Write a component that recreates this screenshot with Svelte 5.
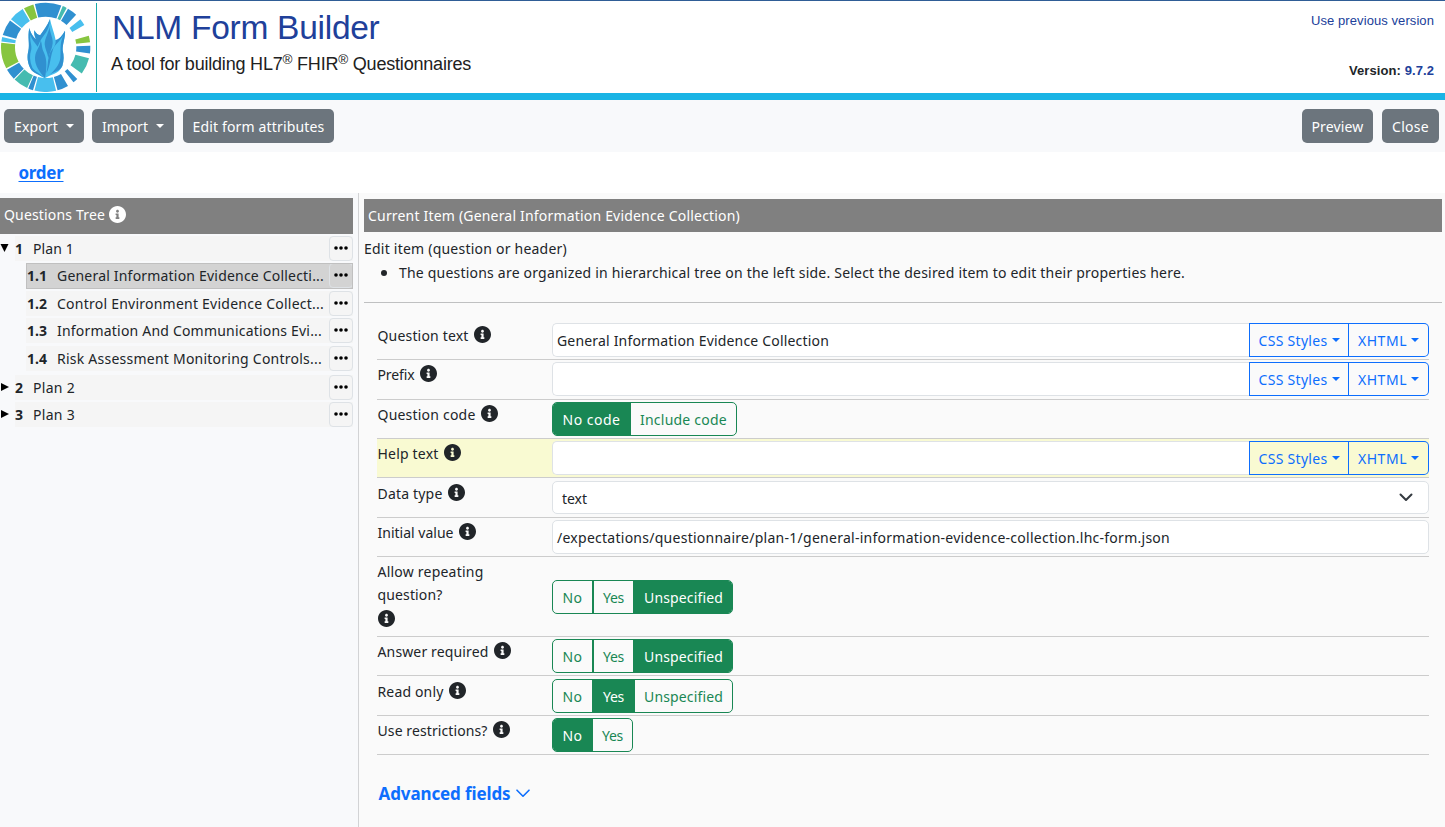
<script>
  // Spreads a label's letters so that it occupies its designed width.
  function fit(node, width) {
    const natural = node.getBoundingClientRect().width;
    const count = [...node.textContent].length;
    node.style.letterSpacing = `${(width - natural) / count}px`;
  }

  const BLUE = '#3090d0', SKY = '#48bfee', TEAL = '#45bbb0', GREEN = '#87c540';
  const ring = [
    [-14, 20.5, BLUE], [22.5, 28, TEAL], [30, 43, BLUE], [51, 60, SKY], [75, 83.5, GREEN],
    [88, 98, BLUE], [104, 126, TEAL], [135, 141.5, BLUE], [150, 164.5, BLUE], [166.5, 194.5, SKY],
    [196.5, 203, BLUE], [204.5, 224, TEAL], [225.5, 240, BLUE], [242, 276, GREEN],
    [277.5, 283.5, SKY], [286, 307, BLUE], [309, 329, SKY], [331, 344, GREEN]
  ];
  const pt = (r, a) => {
    const t = (a * Math.PI) / 180;
    return `${(137 + r * Math.sin(t)).toFixed(1)} ${(142 - r * Math.cos(t)).toFixed(1)}`;
  };
  const wedge = ([a, b]) =>
    `M${pt(134, a)}A134 134 0 0 1 ${pt(134, b)}L${pt(92, b)}A92 92 0 0 0 ${pt(92, a)}Z`;

  const tree = [
    { n: '1', text: 'Plan 1', w: 41, open: true, h: 27 },
    { n: '1.1', text: 'General Information Evidence Collecti...', w: 267, child: true, active: true, h: 28 },
    { n: '1.2', text: 'Control Environment Evidence Collect...', w: 267, child: true, h: 27 },
    { n: '1.3', text: 'Information And Communications Evi...', w: 265, child: true, h: 28 },
    { n: '1.4', text: 'Risk Assessment Monitoring Controls...', w: 265, child: true, h: 29 },
    { n: '2', text: 'Plan 2', w: 42, h: 27 },
    { n: '3', text: 'Plan 3', w: 42, h: 27 }
  ];

  const tri = [['No', 20, 39], ['Yes', 21, 41], ['Unspecified', 79, 99]];
  const rows = [
    { label: 'Question text', w: 91, h: 40, pad: 3, kind: 'rich', value: 'General Information Evidence Collection', vw: 272 },
    { label: 'Prefix', w: 37, h: 40, pad: 2, kind: 'rich', value: '' },
    { label: 'Question code', w: 98, h: 39, pad: 2, kind: 'radio', options: [['No code', 58, 77], ['Include code', 87, 106]], on: 0 },
    { label: 'Help text', w: 61, h: 39, pad: 2, kind: 'rich', value: '', lit: true },
    { label: 'Data type', w: 65, h: 40, pad: 3, kind: 'select', value: 'text', vw: 25 },
    { label: 'Initial value', w: 76, h: 39, pad: 2, kind: 'text', value: '/expectations/questionnaire/plan-1/general-information-evidence-collection.lhc-form.json', vw: 613 },
    { label: 'Allow repeating', w: 106, label2: 'question?', w2: 65, h: 80, pad: 23, kind: 'radio', options: tri, on: 2 },
    { label: 'Answer required', w: 111, h: 39, pad: 2, kind: 'radio', options: tri, on: 2 },
    { label: 'Read only', w: 66, h: 40, pad: 3, kind: 'radio', options: tri, on: 1 },
    { label: 'Use restrictions?', w: 110, h: 39, pad: 2, kind: 'radio', options: [['No', 20, 39], ['Yes', 21, 40]], on: 0 }
  ];
</script>

{#snippet info()}
  <svg class="info" viewBox="8 8 496 496" width="17" height="17"><path fill="currentColor" d="M256 8C119 8 8 119 8 256s111 248 248 248 248-111 248-248S393 8 256 8zm0 110c23.200 0 42 18.800 42 42s-18.800 42-42 42-42-18.800-42-42 18.800-42 42-42zm56 254c0 6.600-5.400 12-12 12h-88c-6.600 0-12-5.400-12-12v-24c0-6.600 5.400-12 12-12h12v-64h-12c-6.600 0-12-5.400-12-12v-24c0-6.600 5.400-12 12-12h64c6.600 0 12 5.400 12 12v100h12c6.600 0 12 5.400 12 12v24z"/></svg>
{/snippet}

<div class="page">
  <header>
    <svg class="logo" viewBox="0 0 288 276" width="96" height="92">
      {#each ring as seg}<path d={wedge(seg)} fill={seg[2]} />{/each}
      <path fill={SKY} d="M88 84C91 99 101 112 108 118C103 107 102 100 103 91C108 101 115 106 121 105C131 92 142 77 150 57C153 75 163 98 167 120C176 119 187 107 195 92C197 110 187 132 188 151C192 168 192 181 187 198C176 224 153 222 134 235C117 224 96 218 91 205C82 187 81 169 85 153C90 132 82 112 88 84Z"/>
      <g fill={BLUE}>
        <path d="M88 84C91 99 101 112 108 118C103 107 102 100 103 91C108 101 115 106 121 105C131 92 142 77 150 57C150 76 143 93 131 107C121 119 117 130 113 140C103 126 95 118 91 104C89 124 96 135 94 148C88 166 89 184 97 203C104 214 120 220 132 233C115 223 96 218 91 205C82 187 81 169 85 153C90 132 82 112 88 84Z"/>
        <path d="M122 121C127 132 124 144 132 158C142 178 140 207 135 234C119 217 104 195 105 173C106 151 121 141 122 121Z"/>
        <path d="M149 76C147 96 160 112 158 130C157 146 148 160 145 174C142 157 135 147 134 133C134 114 148 96 149 76Z"/>
        <path d="M167 120C176 119 187 107 195 92C197 110 187 132 188 151C192 168 192 181 187 198C180 213 157 217 144 228C162 214 179 194 181 174C183 151 178 132 190 106C178 127 162 135 158 152C151 171 151 199 139 220C145 194 142 176 151 157C159 144 168 137 167 120Z"/>
      </g>
    </svg>
    <div class="brand">
      <h1><span use:fit={267.5}>NLM Form Builder</span></h1>
      <p><span class="tag">A tool for building HL7<sup>®</sup> FHIR<sup>®</sup> Questionnaires</span></p>
    </div>
    <div class="version">
      <a href="#top">Use previous version</a>
      <b>Version: <i>9.7.2</i></b>
    </div>
  </header>

  <nav>
    <button class="w80"><span use:fit={44}>Export</span><i class="caret gap"></i></button>
    <button class="w82"><span use:fit={46}>Import</span><i class="caret gap"></i></button>
    <button class="w151"><span use:fit={132}>Edit form attributes</span></button>
    <div class="grow"></div>
    <button class="w71"><span use:fit={52}>Preview</span></button>
    <button class="w57"><span use:fit={37}>Close</span></button>
  </nav>

  <div class="crumb"><a href="#order"><span use:fit={45}>order</span></a></div>

  <main>
    <aside>
      <div class="bar"><span use:fit={101}>Questions Tree</span>{@render info()}</div>
      <div class="tree">
        {#each tree as node}
          <div class="node" class:child={node.child} class:active={node.active} style:height="{node.h}px">
            <div class="arrow">
              {#if !node.child}
                <svg width="9" height="8" viewBox="0 0 9 8"><path d={node.open ? 'M.5 0h8L4.500 8z' : 'M1 0l8 4-8 4z'}/></svg>
              {/if}
            </div>
            <div class="item">
              <b>{node.n}</b><div class="name"><span use:fit={node.w}>{node.text}</span></div>
              <button class="more"><svg width="14" height="4" viewBox="0 0 14 4"><circle cx="2" cy="2" r="1.800"/><circle cx="7" cy="2" r="1.800"/><circle cx="12" cy="2" r="1.800"/></svg></button>
            </div>
          </div>
        {/each}
      </div>
    </aside>

    <section>
      <div class="bar"><span use:fit={372}>Current Item (General Information Evidence Collection)</span></div>
      <div class="intro"><span use:fit={203}>Edit item (question or header)</span></div>
      <div class="bullet"><i></i><span use:fit={786}>The questions are organized in hierarchical tree on the left side. Select the desired item to edit their properties here.</span></div>
      <hr />
      <div class="form">
        {#each rows as row}
          <div class="row" class:lit={row.lit} style:height="{row.h}px">
            <div class="label" class:low={row.pad === 3}>
              <span use:fit={row.w}>{row.label}</span>{#if row.label2}<br /><span use:fit={row.w2}>{row.label2}</span><br /><div class="flush">{@render info()}</div>{:else}{@render info()}{/if}
            </div>
            <div class="control" style:padding-top="{row.pad}px">
              {#if row.kind === 'radio'}
                <div class="radios" class:three={row.options.length === 3}>
                  {#each row.options as [text, tw, bw], i}
                    <div class="opt" class:on={row.on === i} style:width="{bw}px"><span use:fit={tw}>{text}</span></div>
                  {/each}
                </div>
              {:else}
                <div class="field" class:rich={row.kind === 'rich'} class:select={row.kind === 'select'}>
                  {#if row.value}<span use:fit={row.vw}>{row.value}</span>{/if}
                  {#if row.kind === 'select'}
                    <svg width="14" height="9" viewBox="0 0 14 9"><path d="M1.500 1.500L7 7l5.500-5.500" fill="none" stroke="#343a40" stroke-width="2" stroke-linecap="round" stroke-linejoin="round"/></svg>
                  {/if}
                </div>
                {#if row.kind === 'rich'}
                  <div class="drop css"><span use:fit={69}>CSS Styles</span><i class="caret"></i></div>
                  <div class="drop xhtml"><span use:fit={49}>XHTML</span><i class="caret"></i></div>
                {/if}
              {/if}
            </div>
          </div>
        {/each}
      </div>
      <a class="advanced" href="#advanced"><span use:fit={132}>Advanced fields</span><svg width="14" height="9" viewBox="0 0 14 9"><path d="M1 1.200l6 6 6-6" fill="none" stroke="currentColor" stroke-width="1.600" stroke-linecap="round" stroke-linejoin="round"/></svg></a>
    </section>
  </main>
</div>

<style>
  :global(body) { margin: 0; overflow: hidden; }
  .page, .page * { box-sizing: border-box; }
  .page {
    display: flex; flex-direction: column; width: 100%; height: 827px; overflow: hidden;
    background: #fff; color: #212529; font: 14px/24px "Noto Sans", "Open Sans", sans-serif;
  }
  span { white-space: nowrap; }
  i { font-style: normal; }
  button { font: inherit; padding: 0; }
  svg { display: block; flex: none; }

  header {
    display: flex; flex: none; height: 100px; border-top: 1px solid #2f5d96;
    border-bottom: 7px solid #1ab4e5; font-family: "Liberation Sans", Arial, sans-serif;
  }
  .logo { width: 96px; height: 92px; margin-top: -1px; }
  .brand { flex: 1; padding-left: 14px; border-left: 1px solid #1aa9a9; margin-top: 2px; height: 89px; }
  h1 { margin: 5px 0 0 1px; font-size: 33.500px; line-height: 40px; font-weight: 400; color: #20409a; }
  .brand p { margin: 3px 0 0; font-size: 18px; line-height: 26px; color: #212121; }
  .tag { letter-spacing: -.2px; }
  sup { font-size: 13.500px; line-height: 0; vertical-align: 6px; }
  .version { display: flex; flex-direction: column; align-items: flex-end; padding: 10px 11px 0 0; font-size: 13px; line-height: 20px; letter-spacing: .08px; }
  .version a { color: #20409a; text-decoration: none; }
  .version b { margin-top: 30px; }
  .version b i { color: #20409a; }

  nav { display: flex; flex: none; height: 52px; padding: 9px 6px 0 4px; background: #f8f9fb; }
  nav button {
    display: flex; align-items: center; justify-content: center; height: 34px; margin-right: 8px;
    border: 0; border-radius: 5px; background: #6c757d; color: #fff;
  }
  nav button span, .opt span, .drop span { padding-top: 2px; }
  nav button:last-child { margin-right: 0; }
  .grow { flex: 1; }
  .w80 { width: 80px; }
  nav .w82 { width: 82px; margin-right: 9px; }
  .w151 { width: 151px; }
  nav .w71 { width: 71px; margin-right: 9px; }
  .w57 { width: 57px; }
  .caret { border: 4px solid transparent; border-top-color: currentColor; border-bottom: 0; margin-left: 4px; margin-top: -1px; }
  .caret.gap { margin-left: 8px; }

  .crumb { flex: none; height: 41px; padding: 9px 0 0 18.500px; font-size: 17px; font-weight: 700; }
  .crumb a { color: #0d6efd; text-underline-offset: 2px; }

  main { display: flex; flex: 1; min-height: 0; }
  aside { flex: none; width: 359px; padding: 5px 5px 0 0; background: #f8f9fb; border-right: 1px solid #d2d3d5; }
  .bar { display: flex; align-items: center; background: #808080; color: #fff; height: 36px; padding: 0 0 3px 4px; }
  .info { display: inline-block; margin-left: 5px; vertical-align: -2px; }
  .bar .info { margin-left: 4px; margin-top: -1px; }
  .tree { padding-top: 2px; }
  .node { display: flex; align-items: flex-start; }
  .arrow { flex: none; width: 15px; padding: 8px 0 0; }
  .child .arrow { width: 26px; }
  .item { display: flex; flex: 1; height: 25px; background: #f5f5f5; }
  .active .item { height: 26px; }
  .item b { width: 18px; font-size: 14px; line-height: 26px; }
  .child .item b { width: 31px; padding-left: 1px; }
  .name { flex: 1; line-height: 26px; }
  .active .item { background: #d3d3d3; outline: 1px solid #c0c0c0; outline-offset: -1px; }
  .more { display: flex; align-items: center; justify-content: center; width: 24px; height: 25px; padding-bottom: 2px; border: 1px solid #dee2e6; border-radius: 4px; background: transparent; }

  section { flex: 1; min-width: 0; padding: 6px 3px 0 5px; background: #fafafa; }
  section .bar { height: 33px; padding-bottom: 0; }
  .intro { margin-top: 5px; }
  .bullet { display: flex; align-items: center; padding-left: 17px; }
  .bullet i { width: 6px; height: 6px; border-radius: 3px; background: #212529; margin-right: 12px; }
  hr { height: 1px; margin: 17px 0 0; border: 0; background: #bfc0c1; }
  .form { margin: 17px 13px 0; }
  .row { display: flex; border-bottom: 1px solid #ccc; }
  .row.lit { background: #f9fad2; }
  .label { width: 175px; line-height: 23px; padding: 3px 0 0 .5px; }
  .label.low { padding-top: 4px; }
  .flush { padding-top: 2px; }
  .flush .info, .flush :global(.info) { margin-left: 0; }
  .control { display: flex; flex: 1; align-items: flex-start; }
  .field { flex: 1; height: 34px; padding-left: 4px; border: 1px solid #dee2e6; border-radius: 5px; background: #fff; line-height: 33px; }
  .field.rich { border-radius: 5px 0 0 5px; border-right: 0; }
  .field.select { display: flex; align-items: center; justify-content: space-between; height: 33px; padding: 0 15px 0 9px; }
  .field.select span { padding-top: 1px; }
  .drop { display: flex; align-items: center; justify-content: center; height: 34px; border: 1px solid #0d6efd; color: #0d6efd; }
  .css { width: 100px; }
  .xhtml { width: 80px; border-left: 0; border-radius: 0 5px 5px 0; }
  .radios { display: flex; height: 34px; border: 1px solid #198754; border-radius: 5px; overflow: hidden; }
  .opt { display: flex; flex: none; align-items: center; justify-content: center; color: #198754; border-left: 1px solid #198754; }
  .three .opt { border-left-width: 2px; }
  .radios .opt:first-child { border-left: 0; }
  .opt.on { background: #198754; color: #fff; }
  .advanced { display: inline-flex; align-items: center; gap: 5px; margin: 27px 0 0 14.500px; color: #0d6efd; font-size: 17px; font-weight: 700; text-decoration: none; }
  .advanced svg { margin-top: -2px; }
</style>
